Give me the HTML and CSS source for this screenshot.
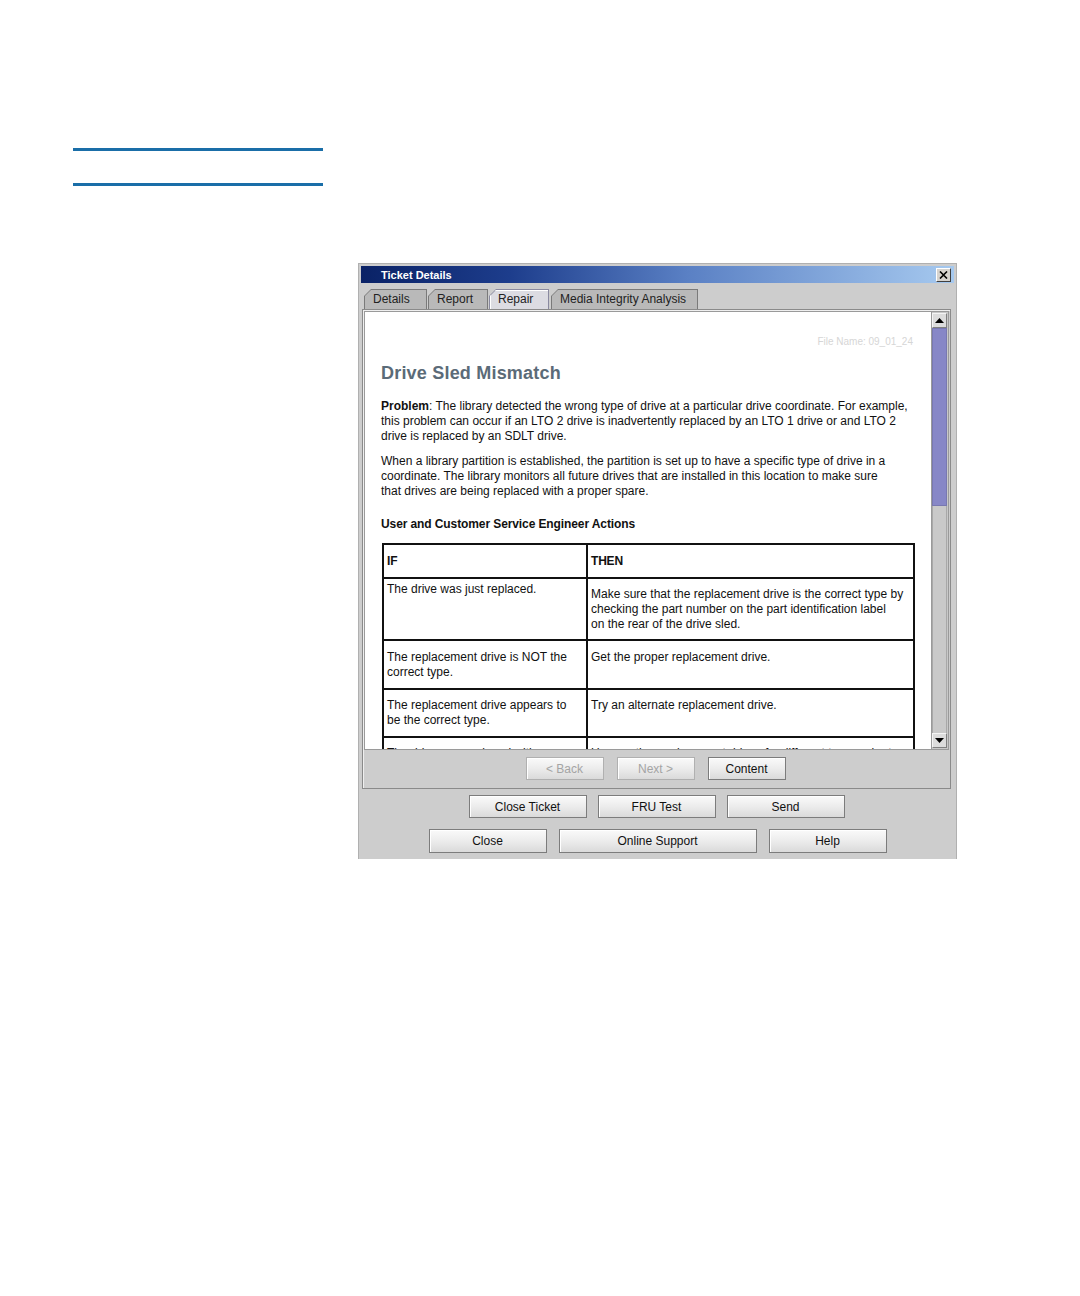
FILE: index.html
```html
<!DOCTYPE html>
<html>
<head>
<meta charset="utf-8">
<title>Ticket Details</title>
<link rel="stylesheet" href="styles.css">
</head>
<body>
<div class="page">
  <div class="rule"></div>
  <div class="rule rule-second"></div>

  <div class="window">
    <div class="titlebar">
      <span class="title">Ticket Details</span>
      <span class="close-x">
        <svg width="9" height="8" viewBox="0 0 9 8"><path d="M1 0.5 L8 7.5 M8 0.5 L1 7.5" stroke="#000" stroke-width="1.6"/></svg>
      </span>
    </div>

    <div class="tabs">
      <div class="tab tab-details"><span>Details</span></div>
      <div class="tab tab-report"><span>Report</span></div>
      <div class="tab tab-repair active"><span>Repair</span></div>
      <div class="tab tab-media"><span>Media Integrity Analysis</span></div>
    </div>

    <div class="panel">
      <div class="scrollpane">
        <div class="doc">
          <div class="fname">File Name: 09_01_24</div>
          <h1 class="doc-title">Drive Sled Mismatch</h1>
          <p class="para"><b>Problem</b>: The library detected the wrong type of drive at a particular drive coordinate. For example, this problem can occur if an LTO 2 drive is inadvertently replaced by an LTO 1 drive or and LTO 2 drive is replaced by an SDLT drive.</p>
          <p class="para para-second">When a library partition is established, the partition is set up to have a specific type of drive in a coordinate. The library monitors all future drives that are installed in this location to make sure that drives are being replaced with a proper spare.</p>
          <h2 class="section">User and Customer Service Engineer Actions</h2>
          <table class="actions">
            <tr class="row-head">
              <th class="col-if">IF</th>
              <th>THEN</th>
            </tr>
            <tr class="row-1">
              <td class="cell-tight">The drive was just replaced.</td>
              <td>Make sure that the replacement drive is the correct type by checking the part number on the part identification label<br>on the rear of the drive sled.</td>
            </tr>
            <tr class="row-2">
              <td>The replacement drive is NOT the correct type.</td>
              <td>Get the proper replacement drive.</td>
            </tr>
            <tr class="row-3">
              <td>The replacement drive appears to be the correct type.</td>
              <td>Try an alternate replacement drive.</td>
            </tr>
            <tr class="row-4">
              <td>The drive was replaced with an identical type.</td>
              <td>Use another replacement drive of a different type and retry.</td>
            </tr>
          </table>
        </div>
        <div class="scrollbar">
          <div class="sb-btn">
            <svg width="9" height="5" viewBox="0 0 9 5"><path d="M0 5 L4.5 0 L9 5 Z" fill="#000"/></svg>
          </div>
          <div class="sb-thumb"></div>
          <div class="sb-track"></div>
          <div class="sb-btn">
            <svg width="9" height="5" viewBox="0 0 9 5"><path d="M0 0 L9 0 L4.5 5 Z" fill="#000"/></svg>
          </div>
        </div>
      </div>
      <div class="nav-row">
        <button class="btn btn-nav" disabled>&lt; Back</button>
        <button class="btn btn-nav" disabled>Next &gt;</button>
        <button class="btn btn-nav">Content</button>
      </div>
    </div>

    <div class="btn-row btn-row-1">
      <button class="btn btn-wide">Close Ticket</button>
      <button class="btn btn-wide">FRU Test</button>
      <button class="btn btn-wide">Send</button>
    </div>
    <div class="btn-row btn-row-2">
      <button class="btn btn-wide">Close</button>
      <button class="btn btn-long">Online Support</button>
      <button class="btn btn-wide">Help</button>
    </div>
  </div>
</div>
</body>
</html>
```

FILE: styles.css
```css
* { box-sizing: border-box; }

html, body {
  margin: 0;
  padding: 0;
  background: #ffffff;
}

body {
  font-family: "Liberation Sans", Arial, sans-serif;
  color: #111;
}

.page {
  padding-top: 148px;
  width: 1080px;
  height: 1296px;
}

.rule {
  margin-left: 73px;
  width: 250px;
  height: 3px;
  background: #1a6ea8;
}

.rule-second {
  margin-top: 32px;
}

/* ---------- window ---------- */
.window {
  margin-top: 77px;
  margin-left: 358px;
  width: 599px;
  height: 596px;
  border: 1px solid #b0b0b0;
  border-bottom: none;
  padding: 2px 2px 0 2px;
  background: #cdcdcd;
  display: flex;
  flex-direction: column;
}

.titlebar {
  height: 17px;
  background: linear-gradient(to right, #0a2266 0%, #1d3d8c 25%, #5a80c4 55%, #a6c9ef 100%);
  display: flex;
  align-items: center;
  justify-content: space-between;
  padding: 0 3px 0 20px;
}

.title {
  color: #fff;
  font-weight: bold;
  font-size: 11px;
}

.close-x {
  width: 15px;
  height: 14px;
  background: #d6d3ce;
  border: 1px solid;
  border-color: #ffffff #404040 #404040 #ffffff;
  display: flex;
  align-items: center;
  justify-content: center;
  margin-top: 1px;
}

/* ---------- tabs ---------- */
.tabs {
  margin-top: 5px;
  height: 21px;
  padding-left: 3px;
  padding-top: 1px;
  display: flex;
  gap: 1px;
  align-items: flex-end;
}

.tab {
  height: 20px;
  background: #7a7a7a;
  padding: 1px 1px 0 1px;
  clip-path: polygon(7px 0, 100% 0, 100% 100%, 0 100%, 0 7px);
}

.tab span {
  display: block;
  height: 100%;
  background: #b9b9b9;
  clip-path: polygon(6px 0, 100% 0, 100% 100%, 0 100%, 0 6px);
  font-size: 12px;
  line-height: 18px;
  padding-left: 8px;
  color: #222;
  white-space: nowrap;
}

.tab.active {
  background: #8a8aa0;
}

.tab.active span {
  background: #dcdce2;
  box-shadow: inset 1px 1px 0 #ffffff;
}

.tab-details { width: 63px; }
.tab-report  { width: 60px; }
.tab-repair  { width: 60px; }
.tab-media   { width: 147px; margin-left: 1px; }

/* ---------- panel ---------- */
.panel {
  margin: 0 3px 0 1px;
  height: 480px;
  border: 1px solid #8a8a8a;
  box-shadow: inset 1px 1px 0 #efefef;
  padding: 1px 1px 0 1px;
  display: flex;
  flex-direction: column;
}

.scrollpane {
  height: 439px;
  display: flex;
  background: #ffffff;
  border: 1px solid #9a9a9a;
}

.doc {
  flex: 1;
  overflow: hidden;
  padding: 24px 17px 0 16px;
}

.fname {
  text-align: right;
  font-size: 10px;
  line-height: 12px;
  color: #d6d6d6;
  padding-right: 1px;
}

.doc-title {
  margin: 14px 0 0 0;
  font-size: 18px;
  line-height: 22px;
  font-weight: bold;
  color: #5b6b78;
  letter-spacing: 0.2px;
}

.para {
  margin: 15px 0 0 0;
  font-size: 12px;
  line-height: 15px;
  padding-right: 2px;
}

.para-second {
  margin-top: 10px;
  padding-right: 18px;
}

.section {
  margin: 18px 0 0 0;
  font-size: 12px;
  line-height: 15px;
  font-weight: bold;
  letter-spacing: -0.1px;
}

.actions {
  margin-top: 11px;
  margin-left: 1px;
  width: 533px;
  border-collapse: collapse;
  font-size: 12px;
  line-height: 15px;
}

.actions th,
.actions td {
  border: 2px solid #111;
  text-align: left;
  vertical-align: top;
  padding: 8px 3px 0 3px;
  font-weight: normal;
}

.actions th {
  font-weight: bold;
  vertical-align: middle;
  padding-top: 0;
  letter-spacing: -0.2px;
}

.col-if { width: 204px; }

.row-head { height: 34px; }
.row-1 { height: 62px; }
.row-2 { height: 49px; }
.row-3 { height: 48px; }
.row-4 { height: 48px; }

.actions .row-2 td { padding-top: 9px; }
.actions td.cell-tight { padding-top: 3px; }

/* ---------- scrollbar ---------- */
.scrollbar {
  width: 17px;
  display: flex;
  flex-direction: column;
  background: #c8c8c8;
  border-left: 1px solid #9a9a9a;
  padding: 1px 1px 1px 0;
}

.sb-btn {
  height: 15px;
  background: #dcdcdc;
  border: 1px solid;
  border-color: #f4f4f4 #808080 #808080 #f4f4f4;
  display: flex;
  align-items: center;
  justify-content: center;
}

.sb-thumb {
  height: 178px;
  border: 1px solid #7878b0;
  background-color: #b0b0e0;
  background-image:
    radial-gradient(circle, #8686c6 0.7px, transparent 0.9px);
  background-size: 2px 2px;
}

.sb-track {
  flex: 1;
  background: #c9c9c9;
  border-left: 1px solid #a8a8a8;
  border-right: 1px solid #a8a8a8;
}

/* ---------- buttons ---------- */
.nav-row {
  padding-top: 7px;
  display: flex;
  justify-content: center;
  gap: 13px;
  padding-right: 2px;
}

.btn {
  font-family: "Liberation Sans", Arial, sans-serif;
  font-size: 12px;
  color: #111;
  height: 23px;
  padding: 0;
  border: 1px solid #7c7c7c;
  background: linear-gradient(to bottom, #fafafa 0%, #ececec 50%, #dadada 100%);
  box-shadow: inset 1px 1px 0 #ffffff;
  border-radius: 0;
}

.btn:disabled {
  color: #a4a4a4;
  border-color: #b0b0b0;
}

.btn-nav { width: 78px; }
.btn-wide { width: 118px; }
.btn-long { width: 198px; }

.btn-row {
  display: flex;
  justify-content: center;
  gap: 11px;
}

.btn-row-1 {
  margin-top: 6px;
  padding-right: 2px;
}

.btn-row-2 {
  margin-top: 11px;
  gap: 12px;
}

.btn-row-2 .btn { height: 24px; }
```
